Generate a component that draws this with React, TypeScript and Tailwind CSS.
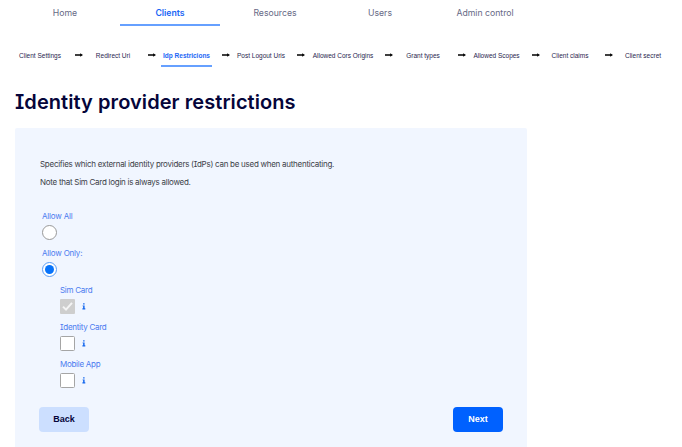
import React from "react";

const tabs = ["Home", "Clients", "Resources", "Users", "Admin control"];

const steps = [
  { label: "Client Settings", width: "w-[50px]", gap: "w-[28px] pl-[10px]" },
  { label: "Redirect Uri", width: "w-[40px]", gap: "w-[28px] pl-[15px]" },
  { label: "Idp Restricions", width: "w-[51px]", gap: "w-[24px] pl-[10px]" },
  { label: "Post Logout Uris", width: "w-[50px]", gap: "w-[27px] pl-[11px]" },
  { label: "Allowed Cors Origins", width: "w-[60px]", gap: "w-[30px] pl-[12px]" },
  { label: "Grant types", width: "w-[40px]", gap: "w-[30px] pl-[15px]" },
  { label: "Allowed Scopes", width: "w-[47px]", gap: "w-[32px] pl-[12px]" },
  { label: "Client claims", width: "w-[36px]", gap: "w-[37px] pl-[17px]" },
  { label: "Client secret", width: "w-[36px]", gap: "" },
];

function Arrow() {
  return (
    <svg width="8" height="6" viewBox="0 0 8 6" className="shrink-0">
      <path d="M0 2.3H5.2V1.2L8 3 5.2 4.8V3.7H0Z" fill="#000" />
    </svg>
  );
}

function Info() {
  return (
    <svg width="4" height="7" viewBox="0 0 4 7">
      <path d="M1.1 .2H2.6V1.5H1.1ZM.6 2.4H2.6V5.3H3.3V6.4H.4V5.3H1.1V3.2H.6Z" fill="#1769ee" />
    </svg>
  );
}

function Check({ label, disabled = false }: { label: string; disabled?: boolean }) {
  return (
    <div className="h-[37px]">
      <div className="h-[12px] whitespace-nowrap">{label}</div>
      <div className="mt-[2px] flex h-[16px] items-center">
        {disabled ? (
          <div className="flex size-[15px] items-center justify-center rounded-[1px] bg-[#cecece]">
            <svg width="11" height="11" viewBox="0 0 11 11" fill="none">
              <path d="M1 5.6 4 8.6 10 1.8" stroke="#f4f4f4" strokeWidth="2" />
            </svg>
          </div>
        ) : (
          <div className="size-[15px] rounded-[1.5px] border border-[#a5a5a5] bg-white" />
        )}
        <div className="ml-[7px]">
          <Info />
        </div>
      </div>
    </div>
  );
}

export default function App() {
  return (
    <div className="h-[447px] w-[682px] overflow-hidden bg-white font-['Inter','Noto_Sans',sans-serif] [font-feature-settings:'cv08']">
      <nav className="flex h-[26px] gap-[5px] pl-[15px]">
        {tabs.map((label, i) => (
          <div
            key={label}
            className={`w-[100px] border-b-2 pt-[6px] text-center text-[8.7px] leading-[14px] ${
              i === 1 ? "border-[#66a0ff] font-semibold text-[#1b66f5]" : "border-transparent text-[#666985]"
            }`}
          >
            {label}
          </div>
        ))}
      </nav>

      <div className="mt-[20px] flex h-[21px] pl-[15px] font-['Liberation_Sans',Arial,sans-serif] text-[6.5px] leading-[20px] text-[#29264e]">
        {steps.map((s, i) => (
          <React.Fragment key={s.label}>
            <div
              className={`flex shrink-0 justify-center whitespace-nowrap ${s.width} ${
                i === 2 ? "border-b-2 border-[#66a0ff] font-bold text-[#1b66f5]" : ""
              }`}
            >
              {s.label}
            </div>
            {s.gap && (
              <div className={`flex h-[18px] shrink-0 items-center ${s.gap}`}>
                <Arrow />
              </div>
            )}
          </React.Fragment>
        ))}
      </div>

      <h1 className="mt-[20px] ml-[15px] h-[30px] whitespace-nowrap text-[20px] leading-[30px] font-semibold tracking-[0.07px] text-[#05053a]">
        Identity provider restrictions
      </h1>

      <main className="mt-[11px] ml-[15px] h-[319px] w-[512px] rounded-t-[2px] bg-[#f1f6ff] pt-[27px] pl-[24px]">
        <div className="ml-px text-[8px] leading-[18px] tracking-[-0.27px] whitespace-nowrap text-[#3c3f48]">
          <p>Specifies which external identity providers (IdPs) can be used when authenticating.</p>
          <p>Note that Sim Card login is always allowed.</p>
        </div>

        <div className="mt-[19px] ml-[3px] text-[8px] leading-[12px] tracking-[-0.2px] text-[#4b7bef]">
          <div className="h-[37px]">
            <div>Allow All</div>
            <div className="mt-[3px] size-[15px] rounded-full border border-[#999] bg-white" />
          </div>
          <div className="h-[37px]">
            <div>Allow Only:</div>
            <div className="mt-[3px] flex size-[15px] items-center justify-center rounded-full border border-[#5a9cf5] bg-white">
              <div className="size-[9px] rounded-full bg-[#0873fa]" />
            </div>
          </div>
        </div>

        <div className="ml-[21px] text-[8px] leading-[12px] tracking-[-0.27px] text-[#4b7bef]">
          <Check label="Sim Card" disabled />
          <Check label="Identity Card" />
          <Check label="Mobile App" />
        </div>

        <div className="mt-[12px] flex w-[464px] justify-between font-['Liberation_Sans',Arial,sans-serif] text-[9px] font-bold">
          <button className="h-[25px] w-[50px] rounded-[4px] bg-[#ccdfff] text-[#05053a]">Back</button>
          <button className="h-[25px] w-[50px] rounded-[4px] bg-[#0061ff] text-white">Next</button>
        </div>
      </main>
    </div>
  );
}
